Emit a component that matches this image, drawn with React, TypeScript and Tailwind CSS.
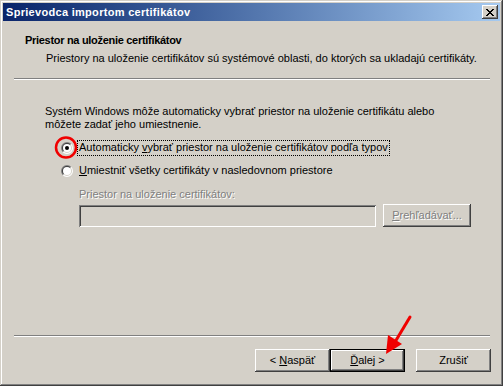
import React from "react";

const raised =
  "shadow-[inset_-1px_-1px_#404040,inset_1px_1px_#ffffff,inset_-2px_-2px_#808080,inset_2px_2px_#d4d0c8]";

function Radio({ checked }: { checked?: boolean }) {
  const half = (r: number, tl: boolean) => {
    const a = r * 0.7071;
    const c = 6;
    return tl
      ? `M ${c - a} ${c + a} A ${r} ${r} 0 0 1 ${c + a} ${c - a} Z`
      : `M ${c + a} ${c - a} A ${r} ${r} 0 0 1 ${c - a} ${c + a} Z`;
  };
  return (
    <svg width="12" height="12" viewBox="0 0 12 12" className="shrink-0">
      <path d={half(6, true)} fill="#808080" />
      <path d={half(6, false)} fill="#ffffff" />
      <path d={half(5, true)} fill="#404040" />
      <path d={half(5, false)} fill="#d4d0c8" />
      <circle cx="6" cy="6" r="4" fill="#ffffff" />
      {checked && <circle cx="6" cy="6" r="2" fill="#000000" />}
    </svg>
  );
}

function Button({
  children,
  def,
  disabled,
  className = "",
}: {
  children: React.ReactNode;
  def?: boolean;
  disabled?: boolean;
  className?: string;
}) {
  if (def) {
    return (
      <div className={`border border-black ${className}`}>
        <div
          className={`w-full h-full flex items-center justify-center ${raised}`}
        >
          {children}
        </div>
      </div>
    );
  }
  return (
    <div
      className={`flex items-center justify-center ${raised} ${
        disabled ? "text-[#808080] [text-shadow:1px_1px_0_#ffffff]" : ""
      } ${className}`}
    >
      {children}
    </div>
  );
}

export default function App() {
  return (
    <div className="w-[503px] h-[386px] bg-[#d4d0c8] relative text-[11px] leading-[13px] text-black font-['Liberation_Sans',Arial,sans-serif] overflow-hidden">
      <div className="w-full h-full p-[3px] flex flex-col shadow-[inset_-1px_-1px_#404040,inset_1px_1px_#d4d0c8,inset_-2px_-2px_#808080,inset_2px_2px_#ffffff]">
        {/* Title bar */}
        <div className="h-[18px] shrink-0 bg-gradient-to-r from-[#0a246a] to-[#a6caf0] flex items-center justify-between pl-[2px] pr-[2px]">
          <span className="text-white font-bold text-[11px] leading-[13px] pl-[1px] tracking-[0.3px]">
            Sprievodca importom certifikátov
          </span>
          <div className={`w-[16px] h-[14px] bg-[#d4d0c8] flex items-center justify-center ${raised}`}>
            <svg width="8" height="7" viewBox="0 0 8 7" shapeRendering="crispEdges">
              <path
                d="M0 0h2v1h-2zM6 0h2v1h-2zM1 1h2v1h-2zM5 1h2v1h-2zM2 2h4v1h-4zM3 3h2v1h-2zM2 4h4v1h-4zM1 5h2v1h-2zM5 5h2v1h-2zM0 6h2v1h-2zM6 6h2v1h-2z"
                fill="#000"
              />
            </svg>
          </div>
        </div>

        {/* Content */}
        <div className="flex-1 flex flex-col">
          {/* Header */}
          <div className="h-[57px] shrink-0 pt-[13px] pl-[22px]">
            <div className="font-bold tracking-[-0.3px]">Priestor na uloženie certifikátov</div>
            <div className="mt-[5px] pl-[21px]">
              Priestory na uloženie certifikátov sú systémové oblasti, do ktorých sa ukladajú certifikáty.
            </div>
          </div>
          <div className="ml-[11px] mr-[10px] h-[2px] border-t border-t-[#808080] border-b border-b-white shrink-0" />

          {/* Body */}
          <div className="pl-[42px] pt-[25px] flex flex-col">
            <div>Systém Windows môže automaticky vybrať priestor na uloženie certifikátu alebo</div>
            <div>môžete zadať jeho umiestnenie.</div>

            <div className="mt-[8px] h-[17px] flex items-center pl-[16px]">
              <Radio checked />
              <div className="ml-[4px] h-[16px] px-[1px] flex items-center border border-dotted border-black">
                <span>
                  Automaticky <u className="underline-offset-[1px]">v</u>ybrať priestor na uloženie certifikátov podľa typov
                </span>
              </div>
            </div>
            <div className="mt-[6px] h-[17px] flex items-center pl-[16px]">
              <Radio />
              <div className="ml-[6px]">
                <span>
                  <u className="underline-offset-[1px]">U</u>miestniť všetky certifikáty v nasledovnom priestore
                </span>
              </div>
            </div>

            <div className="mt-[9px] pl-[34px] text-[#808080] [text-shadow:1px_1px_0_#ffffff]">
              Priestor na uloženie certifikátov:
            </div>
            <div className="mt-[3px] pl-[34px] flex items-center">
              <div className="w-[297px] h-[22px] bg-[#d4d0c8] shadow-[inset_1px_1px_#808080,inset_-1px_-1px_#ffffff,inset_2px_2px_#404040,inset_-2px_-2px_#d4d0c8]" />
              <Button disabled className="ml-[7px] w-[88px] h-[23px]">
                <span>
                  <u className="underline-offset-[1px]">P</u>rehľadávať...
                </span>
              </Button>
            </div>
          </div>

          <div className="flex-1" />
          <div className="ml-[11px] mr-[10px] h-[2px] border-t border-t-[#808080] border-b border-b-white shrink-0" />
          <div className="mt-[12px] mb-[11px] flex justify-end pr-[9px] shrink-0">
            <Button className="w-[75px] h-[23px]">
              <span>
                &lt; <u className="underline-offset-[1px]">N</u>aspäť
              </span>
            </Button>
            <Button def className="w-[75px] h-[23px]">
              <span>
                <u className="underline-offset-[1px]">Ď</u>alej &gt;
              </span>
            </Button>
            <Button className="ml-[11px] w-[75px] h-[23px]">
              <span>Zrušiť</span>
            </Button>
          </div>
        </div>
      </div>

      {/* Red circle annotation */}
      <svg className="absolute left-[54px] top-[136px] pointer-events-none" width="24" height="24" viewBox="0 0 24 24">
        <circle cx="12" cy="11.5" r="10" fill="none" stroke="#f00000" strokeWidth="2.5" />
      </svg>

      {/* Red arrow annotation */}
      <svg className="absolute left-[380px] top-[310px] pointer-events-none" width="40" height="50" viewBox="0 0 40 50">
        <line x1="30" y1="7" x2="15" y2="32" stroke="#f00000" strokeWidth="3" strokeLinecap="round" />
        <polygon points="6,44 8,25 22,34" fill="#f00000" />
      </svg>
    </div>
  );
}
